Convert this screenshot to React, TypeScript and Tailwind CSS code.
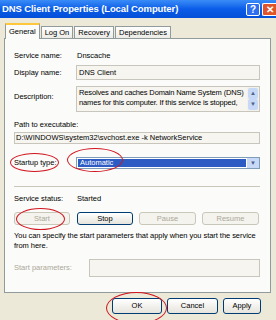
import React from "react";

const font = { fontFamily: '"Liberation Sans", Arial, sans-serif' };

function XpButton({
  label,
  disabled,
  className = "",
}: {
  label: string;
  disabled?: boolean;
  className?: string;
}) {
  return (
    <div
      className={`flex items-center justify-center rounded-[3px] border text-[7.5px] ${
        disabled
          ? "border-[#c9c7ba] bg-[#f4f3ee] text-[#aca899]"
          : "border-[#003c74] bg-gradient-to-b from-white to-[#e6e4dc] text-black"
      } ${className}`}
    >
      {label}
    </div>
  );
}

function Ellipse({ className }: { className: string }) {
  return (
    <div
      className={`pointer-events-none absolute rounded-[50%] border-[1.5px] border-[#d2141e] ${className}`}
    />
  );
}

function Tab({ label, active }: { label: string; active?: boolean }) {
  return (
    <div
      className={`relative flex items-center justify-center border border-b-0 border-[#919b9c] px-[3px] text-[7.5px] ${
        active
          ? "z-10 -mb-px h-[16px] border-t-2 border-t-[#ffc83c] bg-[#fbfbf9]"
          : "h-[12px] bg-gradient-to-b from-white to-[#ecebe5]"
      }`}
    >
      {label}
    </div>
  );
}

export default function App() {
  return (
    <div
      className="relative flex h-[320px] w-[276px] flex-col overflow-hidden bg-[#ece9d8] text-black"
      style={font}
    >
      {/* title bar */}
      <div className="flex h-[18px] items-center justify-between bg-gradient-to-b from-[#3a8cf7] via-[#0a5ce8] to-[#0550d8] pl-[2px]">
        <span className="text-[9.5px] font-bold tracking-[-0.1px] text-white">
          DNS Client Properties (Local Computer)
        </span>
        <div className="flex items-center gap-[2px] pt-[1px]">
          <div className="flex h-[13px] w-[14px] items-center justify-center rounded-[2px] border border-white bg-[#2e6ff0] text-[10px] font-bold leading-none text-white">
            ?
          </div>
          <div className="flex h-[13px] w-[14px] items-center justify-center rounded-l-[2px] border border-r-0 border-white bg-[#e0542c] text-[10px] font-bold leading-none text-white">
            ✕
          </div>
        </div>
      </div>

      {/* tabs */}
      <div className="mt-[5px] flex items-end gap-[1px] pl-[5px]">
        <Tab label="General" active />
        <Tab label="Log On" />
        <Tab label="Recovery" />
        <Tab label="Dependencies" />
      </div>

      {/* panel */}
      <div className="ml-[4px] mr-[5px] flex h-[255px] flex-col border border-[#919b9c] bg-[#fbfbf9] pl-[9px] pr-[10px] text-[7.5px]">
        <div className="mt-[11px] flex h-[12px] items-center">
          <span className="w-[63px]">Service name:</span>
          <span>Dnscache</span>
        </div>
        <div className="mt-[3px] flex items-center">
          <span className="w-[62px]">Display name:</span>
          <div className="flex h-[15px] flex-1 items-center border border-[#c8c6bc] bg-[#f6f5f0] px-[2px]">
            DNS Client
          </div>
        </div>
        <div className="mt-[6px] flex items-start">
          <span className="mt-[5px] w-[62px]">Description:</span>
          <div className="flex h-[26px] flex-1 border border-[#c8c6bc] bg-[#f6f5f0]">
            <div className="flex-1 overflow-hidden whitespace-nowrap px-[2px] pt-[1px] leading-[10px] tracking-[-0.15px]">
              Resolves and caches Domain Name System (DNS)
              <br />
              names for this computer. If this service is stopped,
            </div>
            <div className="flex w-[12px] flex-col justify-between bg-[#f2f1ea] p-[1px]">
              <div className="flex h-[11px] items-center justify-center rounded-[2px] bg-[#c8d9f8] text-[6px] text-[#4d6185]">
                ▲
              </div>
              <div className="flex h-[11px] items-center justify-center rounded-[2px] bg-[#c8d9f8] text-[6px] text-[#4d6185]">
                ▼
              </div>
            </div>
          </div>
        </div>
        <div className="mt-[8px] h-[10px] leading-[10px]">Path to executable:</div>
        <div className="mt-[2px] flex h-[12px] items-center border border-[#c8c6bc] bg-[#f6f5f0] px-[1px]">
          D:\WINDOWS\system32\svchost.exe -k NetworkService
        </div>
        <div className="mt-[13px] flex items-center">
          <span className="w-[62px]">Startup type:</span>
          <div className="flex h-[12px] flex-1 border border-[#7f9db9] bg-white">
            <div className="m-[1px] flex flex-1 items-center bg-[#2c5bc4] px-[2px] text-white">
              Automatic
            </div>
            <div className="flex w-[12px] items-center justify-center bg-[#c8d9f8] text-[6px] text-[#4d6185]">
              ▼
            </div>
          </div>
        </div>
        <div className="mt-[17px] h-px bg-[#c9c7ba]" />
        <div className="mt-[6px] flex h-[12px] items-center">
          <span className="w-[63px]">Service status:</span>
          <span>Started</span>
        </div>
        <div className="mt-[7px] flex items-center">
          <XpButton label="Start" disabled className="h-[13px] w-[56px]" />
          <XpButton label="Stop" className="ml-[7px] h-[13px] w-[56px]" />
          <XpButton label="Pause" disabled className="ml-[6px] h-[13px] w-[57px]" />
          <XpButton label="Resume" disabled className="ml-[6px] h-[13px] w-[57px]" />
        </div>
        <div className="mt-[6px] whitespace-nowrap leading-[10px] tracking-[-0.05px]">
          You can specify the start parameters that apply when you start the service
          <br />
          from here.
        </div>
        <div className="mt-[8px] flex items-center">
          <span className="w-[75px] text-[#aca899]">Start parameters:</span>
          <div className="h-[18px] flex-1 border border-[#c8c6bc] bg-[#f6f5f0]" />
        </div>
      </div>

      {/* bottom buttons */}
      <div className="mt-[5px] flex pl-[112px]">
        <XpButton label="OK" className="h-[16px] w-[50px]" />
        <XpButton label="Cancel" className="ml-[5px] h-[16px] w-[51px]" />
        <XpButton label="Apply" className="ml-[5px] h-[16px] w-[38px]" />
      </div>

      {/* red highlight rings */}
      <Ellipse className="left-[10px] top-[153px] h-[19px] w-[49px]" />
      <Ellipse className="left-[67px] top-[148px] h-[24px] w-[56px]" />
      <Ellipse className="left-[16px] top-[208px] h-[22px] w-[49px]" />
      <Ellipse className="left-[106px] top-[292px] h-[32px] w-[61px]" />
    </div>
  );
}
